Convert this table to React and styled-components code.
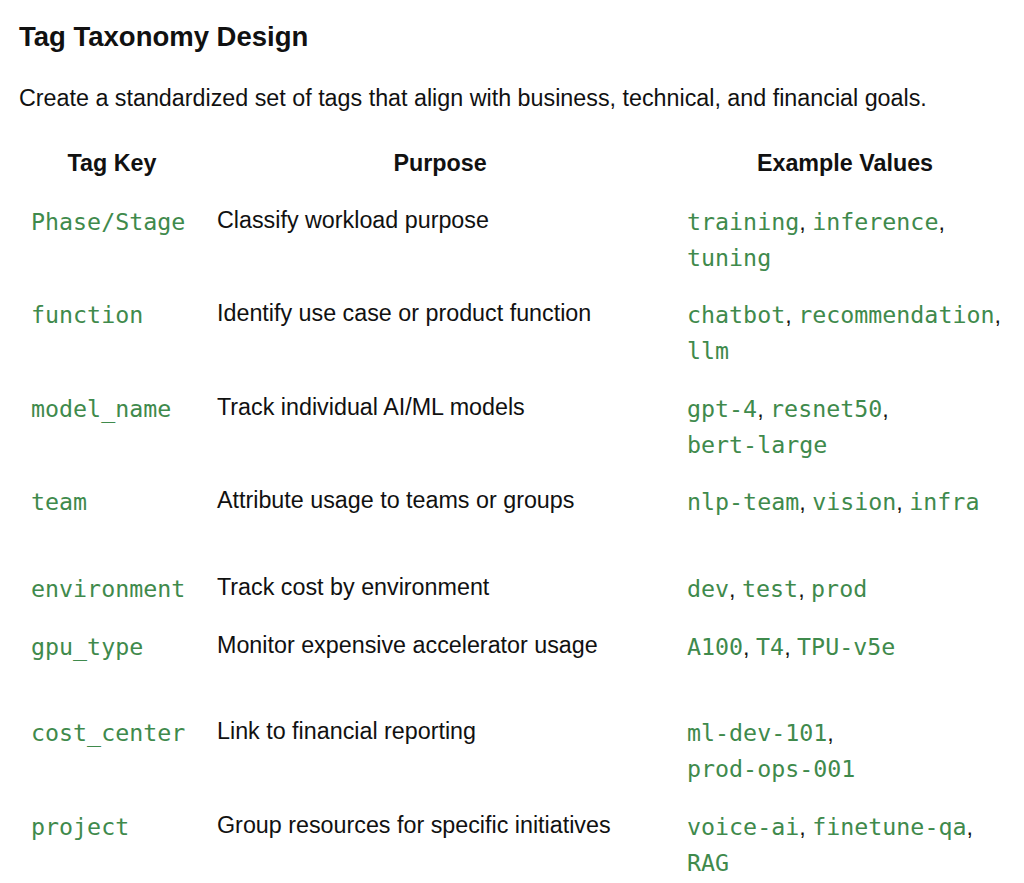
import React from "react";
import styled, { createGlobalStyle } from "styled-components";

const GlobalStyle = createGlobalStyle`
  body {
    margin: 0;
    background: #ffffff;
    font-family: "Liberation Sans", Arial, sans-serif;
    color: #111111;
  }
`;

const Page = styled.div`
  padding: 18px 9px 0 19px;
  width: 1024px;
  box-sizing: border-box;
`;

const Title = styled.h2`
  margin: 0;
  font-size: 27.5px;
  line-height: 38px;
  font-weight: 700;
`;

const Intro = styled.p`
  margin: 25px 0 0;
  font-size: 23.3px;
  line-height: 34px;
`;

const Table = styled.div`
  display: grid;
  grid-template-columns: 186px 470px 340px;
  margin-top: 33px;
`;

const Head = styled.div`
  font-weight: 700;
  font-size: 23.3px;
  line-height: 30px;
  text-align: center;
  padding: 0 12px 26px;
`;

const Cell = styled.div`
  height: ${(p) => p.h}px;
  padding: 0 12px;
  box-sizing: border-box;
`;

const Text = styled.div`
  font-size: 23.3px;
  line-height: 32px;
`;

const Codes = styled.div`
  font-size: 23.3px;
  line-height: 36px;
  color: #111;
`;

const Code = styled.code`
  font-family: "DejaVu Sans Mono", "Liberation Mono", monospace;
  font-size: 23.3px;
  color: #3f8a4c;
`;

const rows = [
  { key: "Phase/Stage", purpose: "Classify workload purpose", values: ["training", "inference", "tuning"], br: 2, h: 93 },
  { key: "function", purpose: "Identify use case or product function", values: ["chatbot", "recommendation", "llm"], br: 2, h: 94 },
  { key: "model_name", purpose: "Track individual AI/ML models", values: ["gpt-4", "resnet50", "bert-large"], br: 2, h: 93 },
  { key: "team", purpose: "Attribute usage to teams or groups", values: ["nlp-team", "vision", "infra"], h: 87 },
  { key: "environment", purpose: "Track cost by environment", values: ["dev", "test", "prod"], h: 58 },
  { key: "gpu_type", purpose: "Monitor expensive accelerator usage", values: ["A100", "T4", "TPU-v5e"], h: 86 },
  { key: "cost_center", purpose: "Link to financial reporting", values: ["ml-dev-101", "prod-ops-001"], br: 1, h: 94 },
  { key: "project", purpose: "Group resources for specific initiatives", values: ["voice-ai", "finetune-qa", "RAG"], br: 2, h: 80 },
];

const Values = ({ values, br }) => (
  <Codes>
    {values.map((v, i) => (
      <React.Fragment key={v}>
        <Code>{v}</Code>
        {i < values.length - 1 && ", "}
        {br === i + 1 && <br />}
      </React.Fragment>
    ))}
  </Codes>
);

const App = () => (
  <Page>
    <GlobalStyle />
    <Title>Tag Taxonomy Design</Title>
    <Intro>
      Create a standardized set of tags that align with business, technical,
      and financial goals.
    </Intro>
    <Table>
      <Head>Tag Key</Head>
      <Head>Purpose</Head>
      <Head>Example Values</Head>
      {rows.map((r) => (
        <React.Fragment key={r.key}>
          <Cell h={r.h}>
            <Codes>
              <Code>{r.key}</Code>
            </Codes>
          </Cell>
          <Cell h={r.h}>
            <Text>{r.purpose}</Text>
          </Cell>
          <Cell h={r.h}>
            <Values values={r.values} br={r.br} />
          </Cell>
        </React.Fragment>
      ))}
    </Table>
  </Page>
);

export default App;
